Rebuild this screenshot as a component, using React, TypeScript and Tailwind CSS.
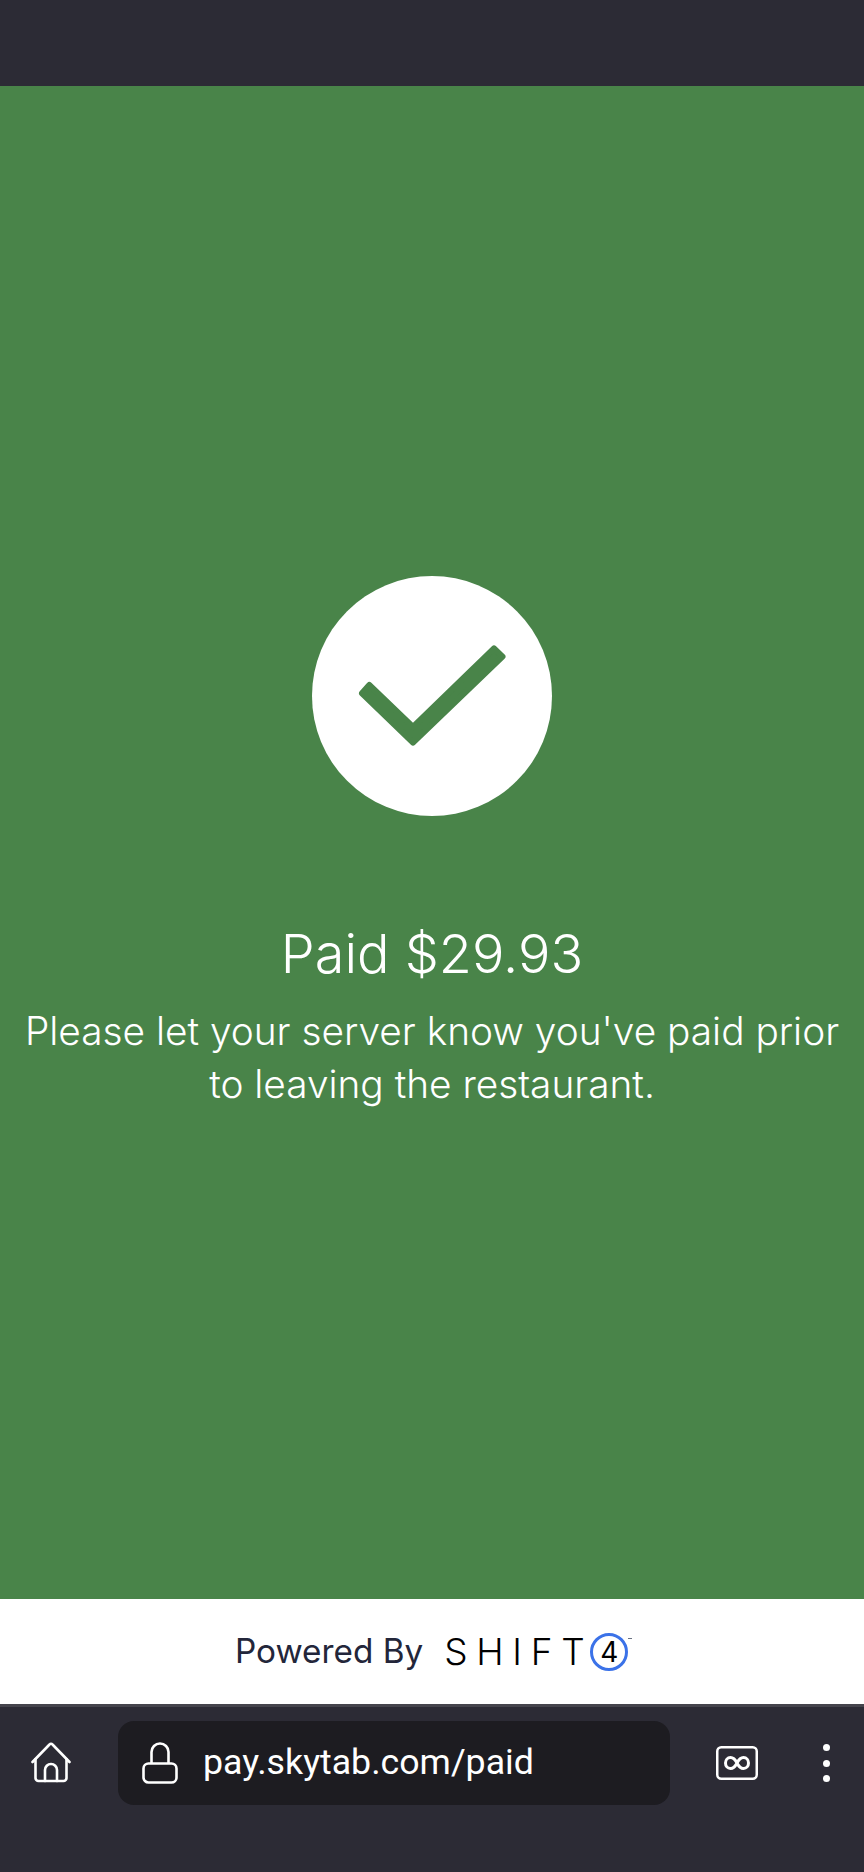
export default function App() {
  return (
    <div className="flex h-[1872px] w-[864px] flex-col overflow-hidden font-['Inter',sans-serif]">
      <div className="h-[86px] shrink-0 bg-[#2c2b35]" />

      <main className="flex h-[1513px] shrink-0 flex-col items-center bg-[#498449] pt-[490px] text-center text-white">
        <div className="flex h-[240px] w-[240px] items-center justify-center rounded-full bg-white">
          <svg width="240" height="240" viewBox="0 0 240 240">
            <polygon points="57.300,109 50,117.300 101,166.500 190.500,80.700 182,72.500 101,151" fill="#498449" stroke="#498449" strokeWidth="6" strokeLinejoin="round" />
          </svg>
        </div>
        <h1 className="mt-[108px] text-[54px] leading-[60px] font-light">Paid $29.93</h1>
        <p className="mt-[20px] w-[840px] text-[38.800px] leading-[53px] font-[350]">
          Please let your server know you've paid prior to leaving the restaurant.
        </p>
      </main>

      <footer className="flex h-[105px] shrink-0 items-center bg-white pl-[235px]">
        <span className="text-[33.300px] text-[#23263a]">Powered By</span>
        <span className="ml-[21px] w-[146px] text-[37px] leading-none font-light tracking-[0.235em] text-black">SHIFT</span>
        <span className="relative flex h-[38px] w-[38px] items-center justify-center rounded-full border-[3px] border-[#3b72e8] text-[28px] leading-none font-normal text-black">
          4
          <span className="absolute top-[2px] right-[-7px] h-[1px] w-[4px] bg-gray-500" />
        </span>
      </footer>

      <nav className="flex flex-1 items-start border-t-[3px] border-[#45444c] bg-[#2c2b35] pt-[14px]">
        <div className="flex h-[84px] w-full items-center">
          <svg className="ml-[31px]" width="40" height="42" viewBox="0 0 40 42" fill="none" stroke="white" strokeWidth="2.6" strokeLinecap="round" strokeLinejoin="round">
            <path d="M1.5 20 L18.5 2.5 a2 2 0 0 1 3 0 L38.5 20" />
            <path d="M4.5 17 V36 a3 3 0 0 0 3 3 H32.500 a3 3 0 0 0 3 -3 V17" />
            <path d="M14 39 V28 a6 6 0 0 1 12 0 V39" />
          </svg>

          <div className="ml-[47px] flex h-[84px] w-[552px] items-center rounded-[16px] bg-[#1d1c21] pl-[24px]">
            <svg width="36" height="42" viewBox="0 0 36 42" fill="none" stroke="white" strokeWidth="2.6">
              <rect x="1.5" y="21.5" width="33" height="19" rx="5" />
              <path d="M9.500 21 V10 a8.500 8.500 0 0 1 17 0 V21" />
            </svg>
            <span className="ml-[25px] font-['Roboto',sans-serif] text-[35.700px] text-white">pay.skytab.com/paid</span>
          </div>

          <svg className="ml-[46px]" width="42" height="34" viewBox="0 0 42 34" fill="none" stroke="white">
            <rect x="1.250" y="1.250" width="39.500" height="31.500" rx="4" strokeWidth="2.500" />
            <path d="M21 17 C19 13 17 11.500 14.500 11.500 C11.500 11.500 9.500 14 9.500 17 C9.500 20 11.500 22.500 14.500 22.500 C17 22.500 19 21 21 17 C23 13 25 11.500 27.500 11.500 C30.500 11.500 32.500 14 32.500 17 C32.500 20 30.500 22.500 27.500 22.500 C25 22.500 23 21 21 17 Z" strokeWidth="3" />
          </svg>

          <div className="ml-[65px] flex flex-col gap-[8.500px]">
            <span className="h-[7px] w-[7px] rounded-full bg-white" />
            <span className="h-[7px] w-[7px] rounded-full bg-white" />
            <span className="h-[7px] w-[7px] rounded-full bg-white" />
          </div>
        </div>
      </nav>
    </div>
  );
}
